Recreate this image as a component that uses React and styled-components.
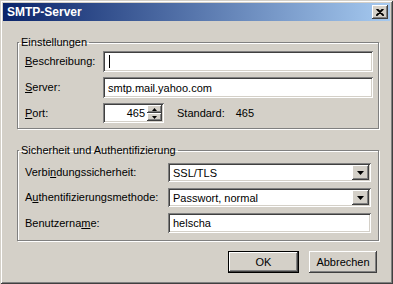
import styled, { createGlobalStyle } from 'styled-components'

const GlobalStyle = createGlobalStyle`
  html, body {
    margin: 0;
    padding: 0;
    background: #d4d0c8;
  }
  body {
    font-family: "Liberation Sans", Arial, sans-serif;
    font-size: 11px;
    color: #000;
  }
`

const raised = `
  box-shadow: inset -1px -1px #404040, inset 1px 1px #ffffff,
    inset -2px -2px #808080, inset 2px 2px #d4d0c8;
`

const sunken = `
  box-shadow: inset 1px 1px #808080, inset -1px -1px #ffffff,
    inset 2px 2px #404040, inset -2px -2px #d4d0c8;
`

const Window = styled.div`
  width: 393px;
  height: 284px;
  box-sizing: border-box;
  padding: 3px;
  background: #d4d0c8;
  box-shadow: inset 1px 1px #d4d0c8, inset -1px -1px #404040,
    inset 2px 2px #ffffff, inset -2px -2px #808080;
  display: flex;
  flex-direction: column;
`

const TitleBar = styled.div`
  height: 18px;
  background: linear-gradient(to right, #0a246a, #a6caf0);
  display: flex;
  align-items: center;
  justify-content: space-between;
  padding: 0 2px 0 4px;
  color: #fff;
  font-weight: bold;
  font-size: 12px;
`

const CloseButton = styled.div`
  width: 16px;
  height: 14px;
  background: #d4d0c8;
  ${raised}
  display: flex;
  align-items: center;
  justify-content: center;
`

const Body = styled.div`
  flex: 1;
  display: flex;
  flex-direction: column;
  padding: 15px 11px 0 14px;
  gap: 15px;
`

const Group = styled.fieldset`
  margin: 0;
  border: 1px solid #808080;
  box-shadow: 1px 1px #ffffff, inset 1px 1px #ffffff;
  padding: ${p => p.$padTop}px ${p => p.$padRight}px ${p => p.$padBottom}px 7px;
  min-width: 0;
`

const Legend = styled.legend`
  padding: 0 2px;
  margin-left: -6px;
  line-height: 13px;
  font-size: 11px;
`

const Form = styled.div`
  display: grid;
  grid-template-columns: ${p => p.$labelWidth}px 1fr;
  row-gap: ${p => p.$gap}px;
  align-items: center;
`

const Label = styled.label`
  white-space: nowrap;
  line-height: 13px;

  u {
    text-decoration: underline;
    text-underline-offset: 1px;
  }
`

const Field = styled.div`
  height: ${p => p.$h}px;
  width: ${p => (p.$w ? `${p.$w}px` : 'auto')};
  box-sizing: border-box;
  background: #fff;
  ${sunken}
  padding: 2px;
  display: flex;
  align-items: center;
  justify-content: ${p => (p.$right ? 'flex-end' : 'flex-start')};
`

const FieldText = styled.span`
  flex: 1;
  padding: 0 ${p => (p.$right ? 2 : 0)}px 0 ${p => (p.$right ? 0 : 3)}px;
  text-align: ${p => (p.$right ? 'right' : 'left')};
  white-space: nowrap;
  overflow: hidden;
`

const Caret = styled.span`
  width: 1px;
  height: 13px;
  margin-left: 4px;
  background: #000;
`

const PortRow = styled.div`
  display: flex;
  align-items: center;
`

const Hint = styled.span`
  margin-left: 13px;
  margin-right: 11px;
`

const Spinner = styled.div`
  width: 15px;
  height: 100%;
  display: flex;
  flex-direction: column;
`

const SpinHalf = styled.div`
  flex: 1;
  background: #d4d0c8;
  ${raised}
  display: flex;
  align-items: center;
  justify-content: center;
`

const DropButton = styled.div`
  width: 17px;
  height: 100%;
  background: #d4d0c8;
  ${raised}
  display: flex;
  align-items: center;
  justify-content: center;
`

const Buttons = styled.div`
  display: flex;
  justify-content: flex-end;
  gap: 10px;
  margin: -5px 2px 0 0;
`

const Button = styled.button`
  width: ${p => p.$w}px;
  height: 22px;
  border: none;
  padding: 0;
  background: #d4d0c8;
  font-family: "Liberation Sans", Arial, sans-serif;
  font-size: 11px;
  color: #000;
  box-shadow: ${p =>
    p.$default
      ? 'inset 0 0 0 1px #000, inset -2px -2px #404040, inset 2px 2px #fff, inset -3px -3px #808080'
      : 'inset -1px -1px #404040, inset 1px 1px #fff, inset -2px -2px #808080, inset 2px 2px #d4d0c8'};
`

const Arrow = ({ up, w = 7 }) => (
  <svg width={w} height={Math.ceil(w / 2)} viewBox={`0 0 ${w} ${Math.ceil(w / 2)}`}>
    {up ? (
      <polygon points={`0,${Math.ceil(w / 2)} ${w},${Math.ceil(w / 2)} ${w / 2},0`} fill="#000" />
    ) : (
      <polygon points={`0,0 ${w},0 ${w / 2},${Math.ceil(w / 2)}`} fill="#000" />
    )}
  </svg>
)

const CloseIcon = () => (
  <svg width="8" height="7" viewBox="0 0 8 7">
    <path d="M0.5 0 L7.5 7 M1.5 0 L8 6.5 M7.5 0 L0.5 7 M6.5 0 L0 6.5" stroke="#000" strokeWidth="1.2" />
  </svg>
)

const Select = ({ value }) => (
  <Field $h={19}>
    <FieldText>{value}</FieldText>
    <DropButton>
      <Arrow w={7} />
    </DropButton>
  </Field>
)

export default function App() {
  return (
    <>
      <GlobalStyle />
      <Window>
        <TitleBar>
          <span>SMTP-Server</span>
          <CloseButton>
            <CloseIcon />
          </CloseButton>
        </TitleBar>
        <Body>
          <Group $padTop={2} $padRight={5} $padBottom={5}>
            <Legend>Einstellungen</Legend>
            <Form $labelWidth={78} $gap={5}>
              <Label>
                <u>B</u>eschreibung:
              </Label>
              <Field $h={21}>
                <Caret />
              </Field>
              <Label>
                <u>S</u>erver:
              </Label>
              <Field $h={21}>
                <FieldText>smtp.mail.yahoo.com</FieldText>
              </Field>
              <Label>
                <u>P</u>ort:
              </Label>
              <PortRow>
                <Field $h={20} $w={61}>
                  <FieldText $right>465</FieldText>
                  <Spinner>
                    <SpinHalf>
                      <Arrow up w={5} />
                    </SpinHalf>
                    <SpinHalf>
                      <Arrow w={5} />
                    </SpinHalf>
                  </Spinner>
                </Field>
                <Hint>Standard:</Hint>
                <span>465</span>
              </PortRow>
            </Form>
          </Group>
          <Group $padTop={6} $padRight={7} $padBottom={7}>
            <Legend>Sicherheit und Authentifizierung</Legend>
            <Form $labelWidth={143} $gap={6}>
              <Label>
                Verbi<u>n</u>dungssicherheit:
              </Label>
              <Select value="SSL/TLS" />
              <Label>
                A<u>u</u>thentifizierungsmethode:
              </Label>
              <Select value="Passwort, normal" />
              <Label>
                Benutzerna<u>m</u>e:
              </Label>
              <Field $h={20}>
                <FieldText>helscha</FieldText>
              </Field>
            </Form>
          </Group>
          <Buttons>
            <Button $default $w={71}>OK</Button>
            <Button $w={68}>Abbrechen</Button>
          </Buttons>
        </Body>
      </Window>
    </>
  )
}
